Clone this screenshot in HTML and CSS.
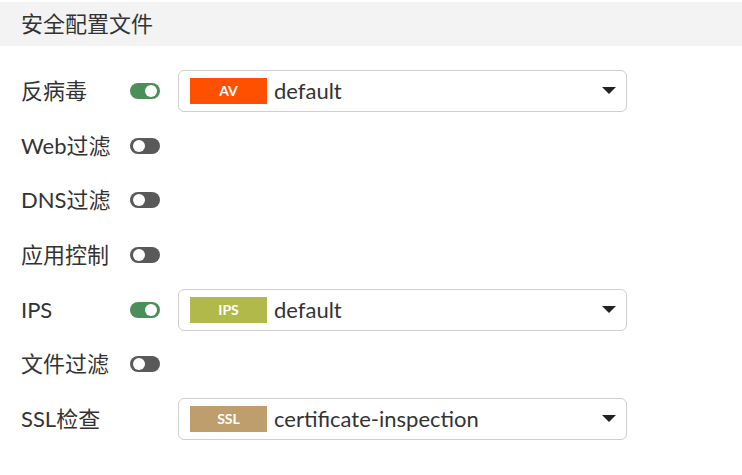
FILE: index.html
```html
<!DOCTYPE html>
<html lang="zh">
<head>
<meta charset="utf-8">
<link rel="stylesheet" href="styles.css">
</head>
<body>
<div class="header">安全配置文件</div>
<div class="rows">
  <div class="row">
    <div class="label">反病毒</div>
    <div class="toggle on"></div>
    <div class="select"><span class="badge av">AV</span><span class="value">default</span><span class="caret"></span></div>
  </div>
  <div class="row">
    <div class="label">Web过滤</div>
    <div class="toggle"></div>
  </div>
  <div class="row">
    <div class="label">DNS过滤</div>
    <div class="toggle"></div>
  </div>
  <div class="row">
    <div class="label">应用控制</div>
    <div class="toggle"></div>
  </div>
  <div class="row">
    <div class="label">IPS</div>
    <div class="toggle on"></div>
    <div class="select"><span class="badge ips">IPS</span><span class="value">default</span><span class="caret"></span></div>
  </div>
  <div class="row">
    <div class="label">文件过滤</div>
    <div class="toggle"></div>
  </div>
  <div class="row">
    <div class="label">SSL检查</div>
    <div class="toggle-space"></div>
    <div class="select"><span class="badge ssl">SSL</span><span class="value">certificate-inspection</span><span class="caret"></span></div>
  </div>
</div>
</body>
</html>
```
FILE: styles.css
```css
* { box-sizing: border-box; }
html, body { margin: 0; padding: 0; background: #fff; }
body {
  font-family: Lato, "Noto Sans CJK SC", sans-serif;
  color: #333;
  padding-top: 2px;
}
.header {
  display: flex;
  align-items: center;
  height: 44px;
  background: #f3f3f3;
  padding-left: 21px;
  font-size: 22px;
  line-height: 1;
}
.rows {
  padding-top: 17.67px;
}
.row {
  display: flex;
  align-items: center;
  height: 54.67px;
  padding-left: 21px;
}
.label {
  width: 109px;
  font-size: 22px;
  line-height: 1;
  white-space: nowrap;
}
.toggle, .toggle-space {
  width: 30px;
  height: 16px;
  flex: none;
  margin-right: 18px;
}
.toggle {
  position: relative;
  border-radius: 8px;
  background: #595959;
}
.toggle::after {
  content: "";
  position: absolute;
  top: 2px;
  left: 3px;
  width: 12px;
  height: 12px;
  border-radius: 50%;
  background: #fff;
}
.toggle.on { background: #4b8f58; }
.toggle.on::after { left: auto; right: 3px; }
.select {
  display: flex;
  align-items: center;
  width: 449px;
  height: 42px;
  border: 1px solid #cfcfcf;
  border-radius: 6px;
  padding: 0 10px 0 11px;
}
.badge {
  width: 77px;
  height: 26px;
  flex: none;
  color: #fff;
  font-weight: bold;
  font-size: 14px;
  line-height: 26px;
  text-align: center;
}
.badge.av { background: #ff5000; }
.badge.ips { background: #b2b94b; }
.badge.ssl { background: #bf9e6d; }
.value {
  flex: 1;
  margin-left: 7px;
  font-size: 22px;
  line-height: 1;
}
.caret {
  width: 0;
  height: 0;
  border-left: 7px solid transparent;
  border-right: 7px solid transparent;
  border-top: 7px solid #222;
}
```
